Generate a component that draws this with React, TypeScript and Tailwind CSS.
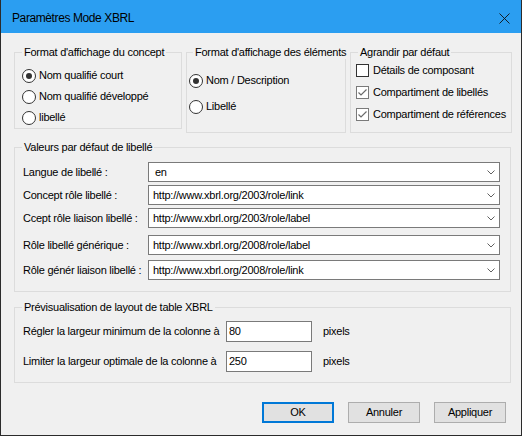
import React from 'react';

const font = { fontFamily: '"Liberation Sans", Arial, sans-serif' };

const Radio = ({ checked, label }: { checked?: boolean; label: string }) => (
  <div className="flex h-[21px] items-center">
    <span className="flex h-[14px] w-[14px] items-center justify-center rounded-full border border-[#333] bg-white">
      {checked && <span className="h-[6px] w-[6px] rounded-full bg-[#333]" />}
    </span>
    <span className="ml-[3px]">{label}</span>
  </div>
);

const Check = ({ checked, label }: { checked?: boolean; label: string }) => (
  <div className="flex h-[22px] items-center">
    <span
      className={`flex h-[13px] w-[13px] items-center justify-center border bg-white ${
        checked ? 'border-[#7a7a7a]' : 'border-[#333]'
      }`}
    >
      {checked && (
        <svg width="9" height="7" viewBox="0 0 9 7">
          <polyline points="0.5,3.5 3,6 8.5,0.5" fill="none" stroke="#6b6b6b" strokeWidth="1.2" />
        </svg>
      )}
    </span>
    <span className="ml-[4px]">{label}</span>
  </div>
);

const Group = ({
  title,
  className,
  legendClass,
  children,
}: {
  title: string;
  className: string;
  legendClass: string;
  children: React.ReactNode;
}) => (
  <fieldset className={`min-w-0 border border-[#dcdcdc] ${className}`}>
    <legend className={`h-[13px] whitespace-nowrap px-[2px] leading-[13px] ${legendClass}`}>{title}</legend>
    {children}
  </fieldset>
);

const Select = ({ value, className = '', editable }: { value: string; className?: string; editable?: boolean }) => (
  <div className={`flex h-[20px] w-[352px] items-center justify-between border border-[#7a7a7a] bg-white ${className}`}>
    <span className={editable ? 'pl-[6px]' : 'pl-[4px]'}>{value}</span>
    <svg width="8" height="5" viewBox="0 0 8 5" className="mr-[4px]">
      <polyline points="0.5,0.5 4,4 7.5,0.5" fill="none" stroke="#606060" strokeWidth="1" />
    </svg>
  </div>
);

const roles = [
  { label: 'Langue de libellé :', value: 'en', mt: 'mt-0', editable: true },
  { label: 'Concept rôle libellé :', value: 'http://www.xbrl.org/2003/role/link', mt: 'mt-[3px]' },
  { label: 'Ccept rôle liaison libellé :', value: 'http://www.xbrl.org/2003/role/label', mt: 'mt-[3px]' },
  { label: 'Rôle libellé générique :', value: 'http://www.xbrl.org/2008/role/label', mt: 'mt-[7px]' },
  { label: 'Rôle génér liaison libellé :', value: 'http://www.xbrl.org/2008/role/link', mt: 'mt-[5px]' },
];

const Button = ({ label, primary }: { label: string; primary?: boolean }) => (
  <div
    className={`flex h-[21px] w-[72px] items-center justify-center bg-[#e1e1e1] ${
      primary ? 'border-2 border-[#0078d7]' : 'border border-[#adadad]'
    }`}
  >
    {label}
  </div>
);

export default function App() {
  return (
    <div className="h-[438px] w-[524px] bg-white" style={font}>
      <div className="flex h-[436px] w-[522px] flex-col border-x border-b border-[#2b2b2b] bg-[#f0f0f0] text-[11px] tracking-[-0.25px] text-black">
        <div className="flex h-[33px] shrink-0 items-center justify-between bg-[#2b9ef1] pl-[11px] pr-[11px] pt-[3px]">
          <span className="text-[12px] tracking-[-0.4px]">Paramètres Mode XBRL</span>
          <svg width="11" height="11" viewBox="0 0 11 11">
            <path d="M0.5 0.5 L10.5 10.5 M10.5 0.5 L0.5 10.5" stroke="#111" strokeWidth="0.9" />
          </svg>
        </div>

        <div className="flex flex-col pl-[13px]">
          <div className="mt-[13px] flex gap-[4px]">
            <Group title="Format d'affichage du concept" className="h-[83px] w-[168px]" legendClass="ml-[7px]">
              <div className="mt-[6px] flex flex-col pl-[7px]">
                <Radio checked label="Nom qualifié court" />
                <Radio label="Nom qualifié développé" />
                <Radio label="libellé" />
              </div>
            </Group>
            <Group title="Format d'affichage des éléments" className="h-[87px] w-[160px]" legendClass="ml-[6px]">
              <div className="mt-[11px] flex flex-col gap-[5px] pl-[2px]">
                <Radio checked label="Nom / Description" />
                <Radio label="Libellé" />
              </div>
            </Group>
            <Group title="Agrandir par défaut" className="h-[87px] w-[162px]" legendClass="ml-[7px]">
              <div className="flex flex-col pl-[5px]">
                <Check label="Détails de composant" />
                <Check checked label="Compartiment de libellés" />
                <Check checked label="Compartiment de références" />
              </div>
            </Group>
          </div>

          <Group title="Valeurs par défaut de libellé" className="mt-[8px] h-[151px] w-[497px]" legendClass="ml-[7px]">
            <div className="mt-[8px] flex flex-col pl-[8px]">
              {roles.map((r) => (
                <div key={r.label} className={`flex items-center ${r.mt}`}>
                  <span className="w-[125px] shrink-0">{r.label}</span>
                  <Select value={r.value} editable={r.editable} />
                </div>
              ))}
            </div>
          </Group>

          <Group title="Prévisualisation de layout de table XBRL" className="mt-[9px] h-[82px] w-[497px]" legendClass="ml-[7px]">
            <div className="mt-[7px] flex flex-col gap-[9px] pl-[8px]">
              {[
                { label: 'Régler la largeur minimum de la colonne à', value: '80' },
                { label: 'Limiter la largeur optimale de la colonne à', value: '250' },
              ].map((r) => (
                <div key={r.label} className="flex items-center">
                  <span className="w-[203px] shrink-0">{r.label}</span>
                  <div className="flex h-[21px] w-[86px] items-start border border-[#7a7a7a] bg-white pl-[2px] pt-[1px]">
                    {r.value}
                  </div>
                  <span className="ml-[11px]">pixels</span>
                </div>
              ))}
            </div>
          </Group>

          <div className="mt-[19px] flex gap-[14px] pl-[248px]">
            <Button primary label="OK" />
            <Button label="Annuler" />
            <Button label="Appliquer" />
          </div>
        </div>
      </div>
    </div>
  );
}
